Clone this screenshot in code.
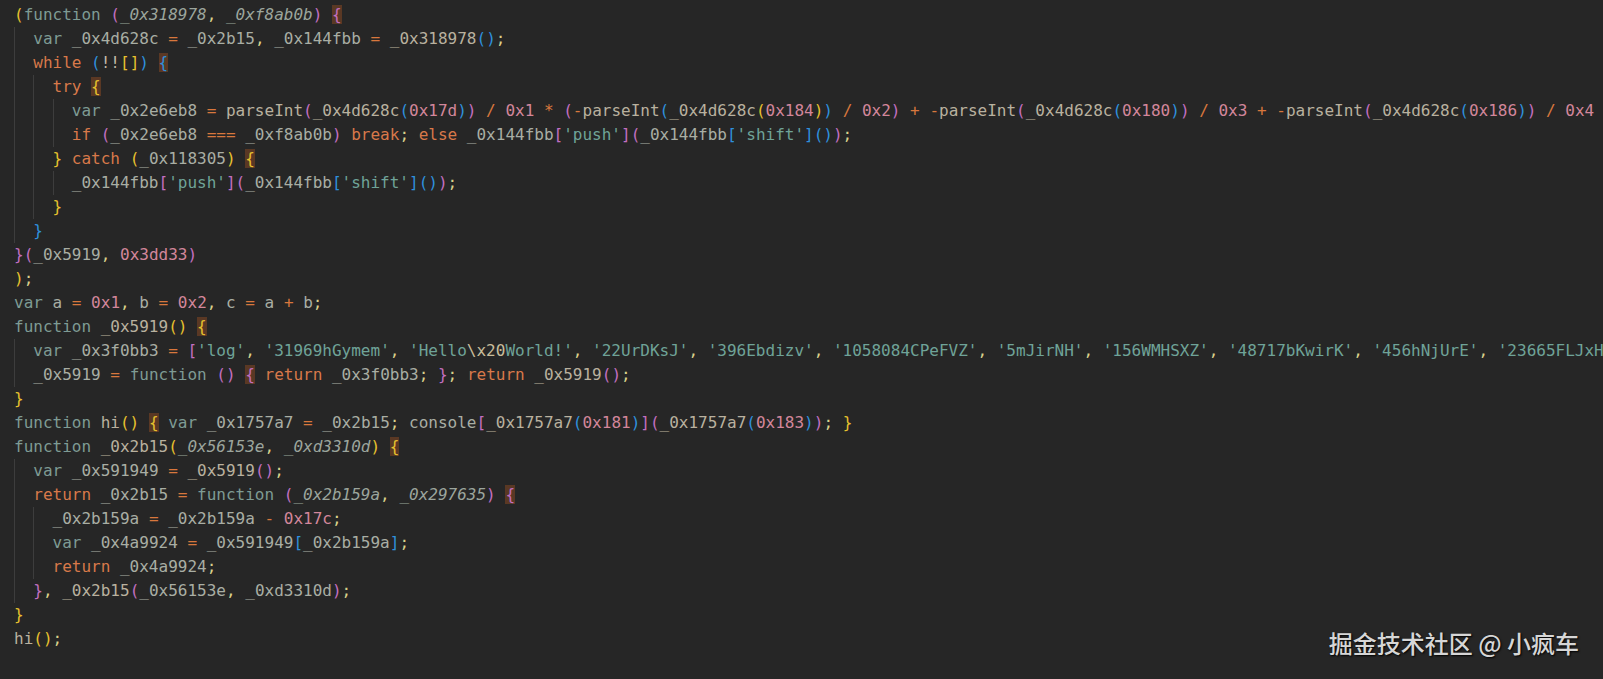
import React from "react";

const LINES = [
  "(function (_0x318978, _0xf8ab0b) {",
  "  var _0x4d628c = _0x2b15, _0x144fbb = _0x318978();",
  "  while (!![]) {",
  "    try {",
  "      var _0x2e6eb8 = parseInt(_0x4d628c(0x17d)) / 0x1 * (-parseInt(_0x4d628c(0x184)) / 0x2) + -parseInt(_0x4d628c(0x180)) / 0x3 + -parseInt(_0x4d628c(0x186)) / 0x4",
  "      if (_0x2e6eb8 === _0xf8ab0b) break; else _0x144fbb['push'](_0x144fbb['shift']());",
  "    } catch (_0x118305) {",
  "      _0x144fbb['push'](_0x144fbb['shift']());",
  "    }",
  "  }",
  "}(_0x5919, 0x3dd33)",
  ");",
  "var a = 0x1, b = 0x2, c = a + b;",
  "function _0x5919() {",
  "  var _0x3f0bb3 = ['log', '31969hGymem', 'Hello\\x20World!', '22UrDKsJ', '396Ebdizv', '1058084CPeFVZ', '5mJirNH', '156WMHSXZ', '48717bKwirK', '456hNjUrE', '23665FLJxH'];",
  "  _0x5919 = function () { return _0x3f0bb3; }; return _0x5919();",
  "}",
  "function hi() { var _0x1757a7 = _0x2b15; console[_0x1757a7(0x181)](_0x1757a7(0x183)); }",
  "function _0x2b15(_0x56153e, _0xd3310d) {",
  "  var _0x591949 = _0x5919();",
  "  return _0x2b15 = function (_0x2b159a, _0x297635) {",
  "    _0x2b159a = _0x2b159a - 0x17c;",
  "    var _0x4a9924 = _0x591949[_0x2b159a];",
  "    return _0x4a9924;",
  "  }, _0x2b15(_0x56153e, _0xd3310d);",
  "}",
  "hi();",
];

const STORAGE = new Set(["var", "function"]);
const CONTROL = new Set(["while", "try", "if", "break", "else", "catch", "return"]);
const BRACKETS = ["text-[#e6c12e]", "text-[#c26fc0]", "text-[#2f90dc]"];

type Tok = { text: string; cls: string; box?: boolean };

const TOKEN_RE =
  /('(?:[^'\\]|\\.)*')|(0x[0-9a-fA-F]+|\d+)|([A-Za-z_$][\w$]*)|(===|[=+\-*/])|(!)|([()[\]{}])|([,;])|(\s+)|(.)/g;

function highlight(lines: string[]) {
  let depth = 0;
  let expectParams = false;
  let inParams = false;

  return lines.map((line) => {
    const indent = line.match(/^ */)![0].length;
    const body = line.slice(indent);
    const raw = Array.from(body.matchAll(TOKEN_RE));
    const toks: Tok[] = [];

    raw.forEach((m, i) => {
      const text = m[0];
      if (m[1]) {
        // strings, with the escape picked out
        text.split(/(\\x[0-9a-fA-F]{2})/).forEach((part) => {
          if (!part) return;
          toks.push({
            text: part,
            cls: part.startsWith("\\x") ? "text-[#c9bd9b]" : "text-[#6fa398]",
          });
        });
      } else if (m[2]) {
        toks.push({ text, cls: "text-[#d3869b]" });
      } else if (m[3]) {
        if (STORAGE.has(text)) {
          if (text === "function") expectParams = true;
          toks.push({ text, cls: "text-[#7e9b94]" });
        } else if (CONTROL.has(text)) {
          toks.push({ text, cls: "text-[#d8794a]" });
        } else if (inParams) {
          toks.push({ text, cls: "text-[#9ca59d] italic" });
        } else {
          const next = raw[i + 1]?.[0];
          toks.push({ text, cls: next === "(" ? "text-[#b9b19f]" : "text-[#a9aea4]" });
        }
      } else if (m[4]) {
        toks.push({ text, cls: "text-[#d8773d]" });
      } else if (m[5]) {
        toks.push({ text, cls: "text-[#c2b8a6]" });
      } else if (m[6]) {
        const open = "([{".includes(text);
        if (open) {
          const cls = BRACKETS[depth % 3];
          if (text === "(" && expectParams) {
            inParams = true;
            expectParams = false;
          }
          depth++;
          toks.push({ text, cls, box: text === "{" });
        } else {
          depth--;
          if (text === ")" && inParams) inParams = false;
          toks.push({ text, cls: BRACKETS[depth % 3] });
        }
      } else if (m[7]) {
        toks.push({ text, cls: "text-[#d9d18c]" });
      } else {
        toks.push({ text, cls: "text-[#a9aea4]" });
      }
    });

    return { indent, toks };
  });
}

export default function App() {
  const rows = highlight(LINES);

  return (
    <div className="relative h-[679px] w-[1603px] overflow-hidden bg-[#262626]">
      <div className="pl-[14px] pt-[3px] font-['DejaVu_Sans_Mono',monospace] text-[16px]">
        {rows.map((row, n) => (
          <div key={n} className="h-[24px] whitespace-pre leading-[24px]">
            {Array.from({ length: row.indent / 2 }).map((_, k) => (
              <span key={k} className="inline-block shadow-[inset_1px_0_0_#3d3d3d]">
                {"  "}
              </span>
            ))}
            {row.toks.map((t, k) => (
              <span key={k} className={t.box ? `${t.cls} bg-[#5a3824]` : t.cls}>
                {t.text}
              </span>
            ))}
          </div>
        ))}
      </div>

      <div className="absolute bottom-[20px] right-[24px] font-['Noto_Sans_CJK_SC',sans-serif] text-[24px] font-medium leading-[32px] text-[#d6d6d6] [text-shadow:1px_1px_2px_#000]">
        掘金技术社区 @ 小疯车
      </div>
    </div>
  );
}
